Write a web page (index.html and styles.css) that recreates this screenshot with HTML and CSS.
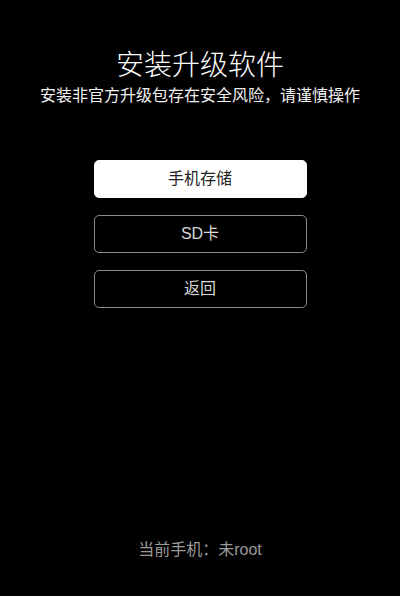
FILE: index.html
```html
<!DOCTYPE html>
<html lang="zh-CN">
<head>
<meta charset="utf-8">
<link rel="stylesheet" href="styles.css">
<title>安装升级软件</title>
</head>
<body>
<div class="screen">
  <header class="head">
    <h1 class="title">安装升级软件</h1>
    <p class="subtitle">安装非官方升级包存在安全风险，请谨慎操作</p>
  </header>
  <div class="actions">
    <button class="btn btn-primary">手机存储</button>
    <button class="btn btn-outline">SD卡</button>
    <button class="btn btn-outline">返回</button>
  </div>
  <footer class="foot">当前手机：未root</footer>
</div>
</body>
</html>
```
FILE: styles.css
```css
html, body {
  margin: 0;
  padding: 0;
  background: #000;
}
.screen {
  width: 400px;
  height: 596px;
  display: flex;
  flex-direction: column;
  align-items: center;
  font-family: "Noto Sans CJK SC", "Noto Sans", sans-serif;
  color: #fff;
  box-sizing: border-box;
  padding-top: 45px;
  padding-bottom: 34px;
}
.head {
  display: flex;
  flex-direction: column;
  align-items: center;
  gap: 1px;
}
.title {
  margin: 0;
  font-size: 28px;
  line-height: 36px;
  font-weight: 300;
  color: #fff;
}
.subtitle {
  margin: 0;
  font-size: 16px;
  line-height: 24px;
  font-weight: 400;
  color: #f0f0f0;
}
.actions {
  margin-top: 54px;
  display: flex;
  flex-direction: column;
  gap: 17px;
  width: 213px;
}
.btn {
  height: 38px;
  border-radius: 5px;
  font-family: "Liberation Sans", "Noto Sans CJK SC", sans-serif;
  font-size: 16px;
  line-height: 24px;
  padding: 0;
  cursor: pointer;
}
.btn-primary {
  background: #fff;
  border: 1px solid #fff;
  color: #222;
}
.btn-outline {
  background: #000;
  border: 1px solid #8a8a8a;
  color: #d8d8d8;
}
.foot {
  margin-top: auto;
  font-family: "Liberation Sans", "Noto Sans CJK SC", sans-serif;
  font-size: 16px;
  line-height: 24px;
  color: #9a9a9a;
}
```
